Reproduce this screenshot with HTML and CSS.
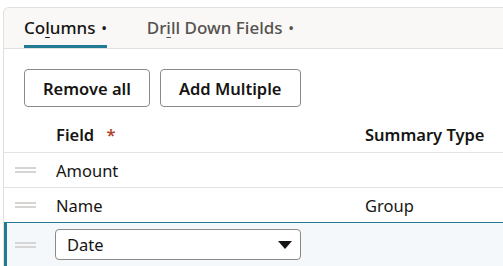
FILE: index.html
```html
<!DOCTYPE html>
<html>
<head>
  <meta charset="utf-8">
  <title>Columns</title>
  <link rel="stylesheet" href="styles.css">
</head>
<body>
  <div class="panel">
    <div class="tabs">
      <div class="tab active">Co<u>l</u>umns<span class="dot">•</span></div>
      <div class="tab">Dr<u>i</u>ll Down Fields<span class="dot">•</span></div>
    </div>
    <div class="toolbar">
      <button class="btn">Remove all</button>
      <button class="btn">Add Multiple</button>
    </div>
    <div class="table">
      <div class="row head">
        <div class="cell"></div>
        <div class="cell">Field <span class="req">*</span></div>
        <div class="cell">Summary Type</div>
      </div>
      <div class="row">
        <div class="cell"><span class="handle"></span></div>
        <div class="cell">Amount</div>
        <div class="cell"></div>
      </div>
      <div class="row">
        <div class="cell"><span class="handle"></span></div>
        <div class="cell">Name</div>
        <div class="cell">Group</div>
      </div>
      <div class="row selected">
        <div class="cell"><span class="handle"></span></div>
        <div class="cell">
          <div class="select">
            <span>Date</span>
            <svg width="14" height="8" viewBox="0 0 14 8"><path d="M0 0h14L7 8z" fill="#161513"/></svg>
          </div>
        </div>
        <div class="cell"></div>
      </div>
    </div>
  </div>
</body>
</html>
```

FILE: styles.css
```css
body {
  margin: 0;
  background: #fff;
  font-family: "Noto Sans", "Open Sans", sans-serif;
  font-size: 16.5px;
  color: #161513;
  overflow: hidden;
}
.panel {
  margin: 7px 0 0 3px;
  border-left: 1px solid #e0dfdd;
  border-top: 1px solid #e0dfdd;
  border-top-left-radius: 6px;
}
.tabs {
  display: flex;
  gap: 40px;
  height: 40px;
  padding-left: 20px;
  background: #f9f8f6;
  border-bottom: 1px solid #e0dfdd;
  border-top-left-radius: 6px;
}
.tab {
  display: flex;
  align-items: center;
  height: 38px;
  padding-top: 1px;
  box-sizing: border-box;
  height: 40px;
  border-bottom: 3px solid transparent;
  color: #55524f;
  font-size: 17px;
  font-weight: 500;
}
.tab.active {
  color: #161513;
  border-bottom-color: #227a94;
}
.tab u {
  text-underline-offset: 3px;
}
.dot {
  margin-left: 6px;
  font-size: 14px;
}
.toolbar {
  display: flex;
  gap: 10px;
  padding: 20px 0 9px 20px;
}
.btn {
  height: 38px;
  padding: 0 18px;
  background: #fff;
  border: 1px solid #8c8a87;
  border-radius: 4px;
  font-family: inherit;
  font-size: 16.5px;
  font-weight: 600;
  color: #161513;
}
.row {
  display: grid;
  grid-template-columns: 52px 309px 1fr;
  align-items: center;
  height: 34px;
  border-top: 1px solid #e4e3e1;
}
.row.head {
  height: 36px;
  border-top: none;
  font-weight: 600;
}
.req {
  color: #b0432a;
  margin-left: 8px;
  font-weight: 600;
}
.handle {
  display: block;
  width: 21px;
  height: 2px;
  margin-left: 11px;
  border-top: 2px solid #d6d5d3;
  border-bottom: 2px solid #d6d5d3;
}
.row.selected {
  height: 43px;
  border-top-color: #227a94;
  background: #f4f8fb;
  box-shadow: inset 3px 0 #227a94;
}
.select {
  display: flex;
  align-items: center;
  justify-content: space-between;
  width: 246px;
  height: 31px;
  box-sizing: border-box;
  margin-left: -1px;
  padding: 0 8px 0 11px;
  background: #fff;
  border: 1px solid #8c8a87;
  border-radius: 4px;
}
```
